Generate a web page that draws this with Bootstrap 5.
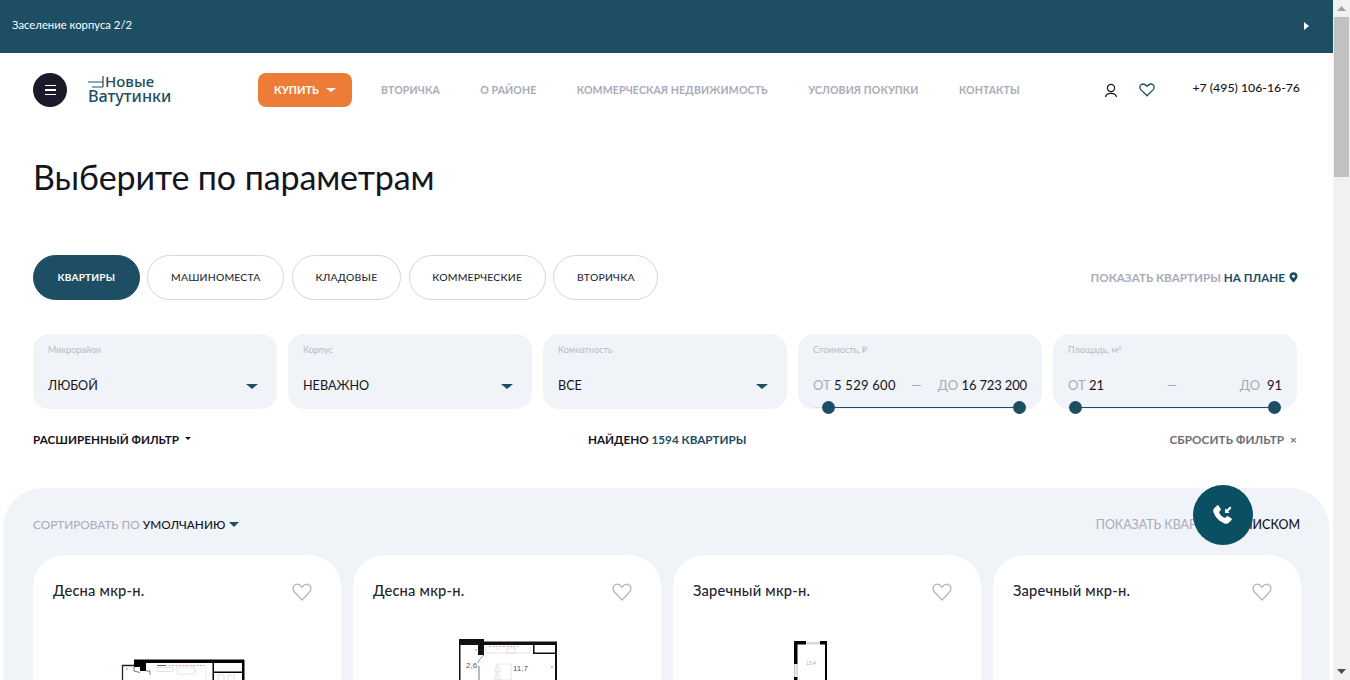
<!DOCTYPE html>
<html lang="ru">
<head>
<meta charset="utf-8">
<title>Новые Ватутинки</title>
<link rel="stylesheet" href="https://cdn.jsdelivr.net/npm/bootstrap@5.3.0/dist/css/bootstrap.min.css">
<style>
html,body{height:680px;overflow:hidden;background:#fff}
body{font-family:"Lato","Liberation Sans",sans-serif;color:#15151f}
.shell{width:1350px;height:680px;overflow:hidden}
.pagecol{width:1333px;height:680px;overflow:hidden;position:relative}
.sbar{width:17px;background:#f1f1f1}
.sbar-up,.sbar-down{height:17px}
.sbar-thumb{height:160px;background:#c1c1c1;margin:0 1px}
.topstrip{height:53px;background:#1d4e63;color:#fff;font-size:11.3px;padding:0 24px 2px 12px}
.tri-r{width:0;height:0;border-left:5px solid #fff;border-top:4px solid transparent;border-bottom:4px solid transparent}
.headrow{height:73px;padding:20px 33px 19px 33px}
.burger{width:34px;height:34px;border-radius:50%;background:#1a1a2b;gap:3px}
.burger i{display:block;width:11px;height:1.5px;background:#fff}
.brand{width:86px;margin-left:21px;color:#1d4e63;position:relative;height:34px;font-family:"Noto Sans",sans-serif;font-weight:500}
.brand-svg{position:absolute;left:0;top:0}
.brand-a{padding-left:17px;padding-top:1px;font-size:15px;line-height:15px}
.brand-b{font-size:16.2px;line-height:15px}
.buybtn{width:94px;height:34px;margin-left:84px;background:#ed7d36;border-radius:8px;color:#fff;font-size:11px;font-weight:700;gap:7px;border:0}
.tri-d{width:0;height:0;border-top:4px solid currentColor;border-left:5px solid transparent;border-right:5px solid transparent}
.navlist{gap:40.4px;margin-left:29px;padding-top:2px;font-size:10.55px;font-weight:700;color:#a9abb9;letter-spacing:.12px}
.rightside{margin-left:auto}
.phone{font-size:12.3px;margin-left:37px;margin-top:-3px;font-weight:500}
.hearttop{margin-left:21px}
.pagetitle{font-size:34px;font-weight:400;line-height:44px;margin:0;padding:29px 33px 0;letter-spacing:-.1px;color:#15151f}
.tabsbox{margin-top:56px;padding:0 33px;height:45px}
.pilltab{height:45px;border-radius:23px;border:1px solid #d5d6df;background:#fff;font-size:10.4px;font-weight:500;padding:0 22.7px;color:#2b2b38;letter-spacing:.2px}
.pilltab.on{background:#1d4e63;border-color:#1d4e63;color:#fff;font-weight:700;font-size:10.1px;padding:0 23.5px}
.pillgap{gap:7.6px}
.onplan{font-size:11.7px;font-weight:700;color:#a9abb9;gap:4px;padding-right:2px}
.onplan b{color:#1d4e63;font-weight:700}
.filters{padding:34px 36px 0 33px;gap:11px}
.fbox{width:244px;height:75px;background:#f0f3f8;border-radius:16px;padding:10px 15px 0;position:relative}
.flabel{font-size:9px;color:#b9bac6;line-height:12px;height:12px}
.flabel sup{font-size:6.5px;top:-.4em}
.fval{font-size:12.6px;margin-top:20px;line-height:20px;color:#15151f}
.fval.nums{font-size:13px;margin-top:19px}
.fval .muted{color:#a9abb9}
.numa{letter-spacing:.25px}
.numb{letter-spacing:-.15px}
.tri-d.deep{color:#1d4e63;border-top-width:5.5px;border-left-width:6px;border-right-width:6px}
.fval .tri-d{margin-right:4px}
.track{position:absolute;left:15px;right:15px;bottom:1px;height:1px;background:#dfe2e9}
.track i{position:absolute;top:0;height:1px;background:#1d4e63}
.thumbdot{position:absolute;top:-6px;width:13px;height:13px;border-radius:50%;background:#1d4e63}
.foundrow{padding:23px 33px 0;font-size:11.7px;font-weight:700;line-height:14px;height:37px}
.foundrow .w1{width:555px;gap:6px}
.foundrow .w2{color:#15151f}
.foundrow .w2 span{color:#1d4e63}
.foundrow .w2 .lead-word{color:#15151f}
.resetlink{margin-left:auto;color:#6d6e79;padding-right:3px;gap:6px;letter-spacing:.1px}
.tri-s{border-top-width:3px;border-left-width:3.5px;border-right-width:3.5px;margin-top:-1px}
.panel{margin:42px 4px 0 3px;background:#f0f3f8;border-radius:40px 40px 0 0;padding:16px 29px 0 30px;height:220px}
.sortrow{font-size:11.8px;height:51px;color:#a9abb9;gap:4px;line-height:16px;padding-bottom:10px}
.sortrow b{color:#15151f;font-weight:500}
.tri-d.sortcaret{color:#1d4e63;border-top-width:5px;border-left-width:5px;border-right-width:5px}
.listshow{margin-left:auto;font-size:12.45px}
.cardgrid{gap:12.5px}
.planbox{width:307.5px;height:300px;background:#fff;border-radius:32px;padding:24px 29px 0 20px;flex:none}
.planhead{font-size:14.7px;font-weight:500;line-height:22px;color:#25252f;letter-spacing:.2px}
.likeicon{margin-top:3px}
.planfig{display:block}
.callbtn{position:absolute;left:1193px;top:485px;width:60px;height:60px;border-radius:50%;background:#0b4f63}
</style>
</head>
<body>
<div class="shell d-flex">
<div class="pagecol">
  <div class="topstrip d-flex align-items-center justify-content-between"><span>Заселение корпуса 2/2</span><span class="tri-r"></span></div>

  <header class="headrow d-flex align-items-center">
    <div class="burger d-flex flex-column align-items-center justify-content-center"><i></i><i></i><i></i></div>
    <div class="brand">
      <svg class="brand-svg" width="86" height="34" viewBox="0 0 86 34"><path d="M0 9H15M4 14H15M15 3V14" stroke="#1d4e63" stroke-width="1.200" fill="none"/></svg>
      <div class="brand-a">Новые</div>
      <div class="brand-b">Ватутинки</div>
    </div>
    <button class="buybtn d-flex align-items-center justify-content-center">КУПИТЬ<span class="tri-d"></span></button>
    <nav class="navlist d-flex">
      <span>ВТОРИЧКА</span><span>О РАЙОНЕ</span><span>КОММЕРЧЕСКАЯ НЕДВИЖИМОСТЬ</span><span>УСЛОВИЯ ПОКУПКИ</span><span>КОНТАКТЫ</span>
    </nav>
    <div class="rightside d-flex align-items-center">
      <svg width="14" height="15" viewBox="0 0 14 15" fill="none" stroke="#15151f" stroke-width="1.200"><circle cx="7" cy="5" r="3.600"/><path d="M1.500 14c.6-2.600 2.600-3.600 5.500-3.600s4.900 1 5.500 3.600"/></svg>
      <svg class="hearttop" width="16" height="14" viewBox="0 0 16 14" fill="none" stroke="#1d4e63" stroke-width="1.300"><path d="M8 12.800 2 6.900C.4 5.200.6 3 2 1.800 3.500.6 5.600.8 8 3.300c2.400-2.500 4.500-2.700 6-1.500 1.400 1.200 1.600 3.400 0 5.100z"/></svg>
      <span class="phone">+7 (495) 106-16-76</span>
    </div>
  </header>

  <h1 class="pagetitle">Выберите по параметрам</h1>

  <div class="tabsbox d-flex align-items-center">
    <div class="d-flex pillgap">
      <div class="pilltab on d-flex align-items-center">КВАРТИРЫ</div>
      <div class="pilltab d-flex align-items-center">МАШИНОМЕСТА</div>
      <div class="pilltab d-flex align-items-center">КЛАДОВЫЕ</div>
      <div class="pilltab d-flex align-items-center">КОММЕРЧЕСКИЕ</div>
      <div class="pilltab d-flex align-items-center">ВТОРИЧКА</div>
    </div>
    <div class="onplan ms-auto d-flex align-items-center"><span>ПОКАЗАТЬ КВАРТИРЫ <b>НА ПЛАНЕ</b></span>
      <svg width="9" height="11" viewBox="0 0 9 11"><path d="M4.500 10.500C2 8 .5 6.300.5 4.300a4 4 0 0 1 8 0c0 2-1.500 3.700-4 6.200z" fill="#1d4e63"/><circle cx="4.500" cy="4.300" r="1.400" fill="#fff"/></svg>
    </div>
  </div>

  <div class="filters d-flex">
    <div class="fbox"><div class="flabel">Микрорайон</div><div class="fval d-flex justify-content-between align-items-center"><span>ЛЮБОЙ</span><span class="tri-d deep"></span></div></div>
    <div class="fbox"><div class="flabel">Корпус</div><div class="fval d-flex justify-content-between align-items-center"><span>НЕВАЖНО</span><span class="tri-d deep"></span></div></div>
    <div class="fbox"><div class="flabel">Комнатность</div><div class="fval d-flex justify-content-between align-items-center"><span>ВСЕ</span><span class="tri-d deep"></span></div></div>
    <div class="fbox"><div class="flabel">Стоимость, ₽</div><div class="fval nums d-flex justify-content-between"><span><span class="muted">ОТ</span> <span class="numa">5 529 600</span></span><span class="muted">—</span><span><span class="muted">ДО</span> <span class="numb">16 723 200</span></span></div>
      <div class="track"><i style="left:15px;width:191px"></i><span class="thumbdot" style="left:9px"></span><span class="thumbdot" style="left:200px"></span></div></div>
    <div class="fbox"><div class="flabel">Площадь, м<sup>2</sup></div><div class="fval nums d-flex justify-content-between"><span><span class="muted">ОТ</span> 21</span><span class="muted">—</span><span><span class="muted">ДО</span>&nbsp; 91</span></div>
      <div class="track"><i style="left:7px;width:199px"></i><span class="thumbdot" style="left:1px"></span><span class="thumbdot" style="left:200px"></span></div></div>
  </div>

  <div class="foundrow d-flex align-items-center">
    <div class="w1 d-flex align-items-center justify-content-start"><span>РАСШИРЕННЫЙ ФИЛЬТР</span><span class="tri-d tri-s"></span></div>
    <div class="w2"><span class="lead-word">НАЙДЕНО</span> <span>1594 КВАРТИРЫ</span></div>
    <div class="resetlink d-flex align-items-center"><span>СБРОСИТЬ ФИЛЬТР</span><span>×</span></div>
  </div>

  <section class="panel">
    <div class="sortrow d-flex align-items-center"><span>СОРТИРОВАТЬ ПО <b>УМОЛЧАНИЮ</b></span><span class="tri-d sortcaret"></span>
      <span class="listshow">ПОКАЗАТЬ КВАРТИРЫ <b>СПИСКОМ</b></span></div>
    <div class="cardgrid d-flex">
      <article class="planbox"><div class="d-flex justify-content-between align-items-center"><span class="planhead">Десна мкр-н.</span><svg class="likeicon" width="20" height="18" viewBox="0 0 20 18" fill="none" stroke="#b3b4c0" stroke-width="1.300"><path d="M10 17 2.500 9C.5 6.800.7 3.800 2.500 2.200 4.500.6 7.300 1 10 4.200c2.700-3.200 5.500-3.600 7.500-2 1.800 1.600 2 4.600 0 6.800z"/></svg></div>
        <svg class="planfig" width="268" height="79" viewBox="0 0 268 79">
          <path d="M81 58.500h110v3.500H81zM189 59h2.500v20H189zM81 62h12v4H81zM87 66h6v4h-6zM159.500 62h1.500v18h-1.500zM161 70.500h28v1.500h-28z" fill="#000"/>
          <path d="M81 64.500H69.500V80" fill="none" stroke="#222" stroke-width="1.300"/>
          <path d="M81 66v4l6 1.500M93 70h4v4" fill="none" stroke="#555" stroke-width=".8"/>
          <path d="M112 64.500h40" stroke="#f2a0a0" stroke-width="1.200" stroke-dasharray="2 1.500"/>
          <path d="M104 64.500h9" stroke="#666" stroke-width="1"/>
          <path d="M104 66.500h16v4h-16zM124 66h18v7h-18zM165 74h6v6h-6zM175 74h6v6h-6zM153 70v10" fill="none" stroke="#ddd" stroke-width=".8"/>
          <circle cx="74" cy="68" r="1" fill="#f2a0a0"/>
        </svg>
      </article>
      <article class="planbox"><div class="d-flex justify-content-between align-items-center"><span class="planhead">Десна мкр-н.</span><svg class="likeicon" width="20" height="18" viewBox="0 0 20 18" fill="none" stroke="#b3b4c0" stroke-width="1.300"><path d="M10 17 2.500 9C.5 6.800.7 3.800 2.500 2.200 4.500.6 7.300 1 10 4.200c2.700-3.200 5.500-3.600 7.500-2 1.800 1.600 2 4.600 0 6.800z"/></svg></div>
        <svg class="planfig" width="268" height="79" viewBox="0 0 268 79">
          <path d="M86 38h25v6H86zM105 44h6v10h-6zM111 40.500h73V44h-73zM182 44h2v35h-2zM86 44h1.500v35H86zM160 44h1.500v8.500H160zM160 51.500h22V53h-22z" fill="#111"/>
          <path d="M116 45.500h29" stroke="#f2a0a0" stroke-width="1.200" stroke-dasharray="2 1.500"/>
          <path d="M124 63h14v16h-14zM122 48h4M113 46v6h44v-6M134 47h8v5h-8zM122 66h5v5h-5zM122 74h5v5h-5z" fill="none" stroke="#ddd" stroke-width=".8"/>
          <path d="M111 54c-3 2-5 5-6 8" fill="none" stroke="#777" stroke-width=".8"/>
          <path d="M105 65h2v14h-2z" fill="#bbb"/>
          <circle cx="103" cy="49" r="1.100" fill="#f2a0a0"/><circle cx="179" cy="66" r="1.100" fill="#f2a0a0"/>
          <text x="93" y="67" font-family="Liberation Sans,sans-serif" font-size="8" fill="#555">2,6</text>
          <text x="140" y="70" font-family="Liberation Sans,sans-serif" font-size="8" fill="#555">11,7</text>
        </svg>
      </article>
      <article class="planbox"><div class="d-flex justify-content-between align-items-center"><span class="planhead">Заречный мкр-н.</span><svg class="likeicon" width="20" height="18" viewBox="0 0 20 18" fill="none" stroke="#b3b4c0" stroke-width="1.300"><path d="M10 17 2.500 9C.5 6.800.7 3.800 2.500 2.200 4.500.6 7.300 1 10 4.200c2.700-3.200 5.500-3.600 7.500-2 1.800 1.600 2 4.600 0 6.800z"/></svg></div>
        <svg class="planfig" width="268" height="79" viewBox="0 0 268 79">
          <path d="M101 40h12v3.500h-8.500V63H101zM127 40h7v39h-2V43.500h-5zM101 76h3.500v3H101z" fill="#000"/>
          <path d="M113 41h14v2.500h-14z" fill="#d9d9d9"/>
          <path d="M101.700 63v13M104 63v13" stroke="#aaa" stroke-width=".8"/>
          <text x="118" y="64" text-anchor="middle" font-family="Liberation Sans,sans-serif" font-size="5" fill="#aaa">13,4</text>
        </svg>
      </article>
      <article class="planbox"><div class="d-flex justify-content-between align-items-center"><span class="planhead">Заречный мкр-н.</span><svg class="likeicon" width="20" height="18" viewBox="0 0 20 18" fill="none" stroke="#b3b4c0" stroke-width="1.300"><path d="M10 17 2.500 9C.5 6.800.7 3.800 2.500 2.200 4.500.6 7.300 1 10 4.200c2.700-3.200 5.500-3.600 7.500-2 1.800 1.600 2 4.600 0 6.800z"/></svg></div></article>
    </div>
  </section>

  <div class="callbtn d-flex align-items-center justify-content-center">
    <svg width="22" height="22" viewBox="0 0 22 22" fill="#fff"><path d="M2 4.500 5 1.500c.6-.5 1.300-.4 1.700.2l2 3.300c.3.500.2 1.100-.2 1.500L7 8c.8 2.800 3.200 5.200 6 6l1.500-1.500c.4-.4 1-.5 1.500-.2l3.300 2c.6.400.7 1.100.2 1.700l-3 3c-1 .9-2.500 1-4 .4C7.500 17.500 3.500 13.500 1.600 8.500 1 7 1.100 5.500 2 4.500z"/><path d="M13 9V4.500l1.500 1.300L18 2.500l1.500 1.500-3.300 3.500L17.500 9z"/></svg>
  </div>
</div>
<aside class="sbar d-flex flex-column">
  <div class="sbar-up d-flex align-items-center justify-content-center"><svg width="9" height="5" viewBox="0 0 9 5"><path d="M4.500 0 9 5H0z" fill="#a3a3a3"/></svg></div>
  <div class="sbar-thumb"></div>
  <div class="flex-grow-1"></div>
  <div class="sbar-down d-flex align-items-center justify-content-center"><svg width="9" height="5" viewBox="0 0 9 5"><path d="M0 0h9L4.500 5z" fill="#505050"/></svg></div>
</aside>
</div>
<script src="https://cdn.jsdelivr.net/npm/bootstrap@5.3.0/dist/js/bootstrap.bundle.min.js"></script>
</body>
</html>
